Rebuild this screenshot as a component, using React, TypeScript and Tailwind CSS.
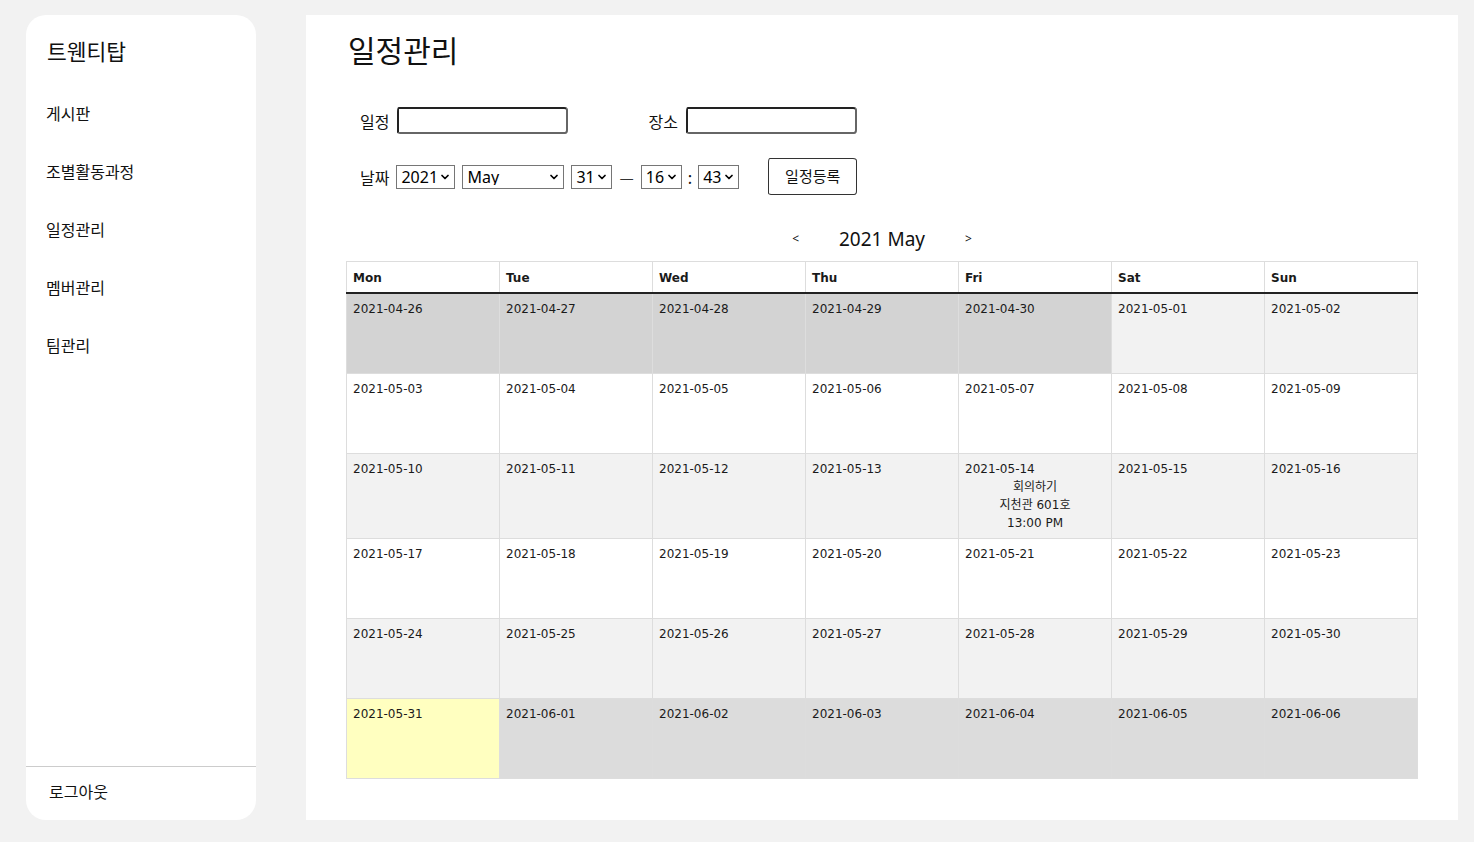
import { ChevronDown } from "lucide-react";

const kr = "font-['Noto_Sans_CJK_KR',sans-serif]";
const cellFont = "font-['DejaVu_Sans','Noto_Sans_CJK_KR',sans-serif]";

const menu = ["게시판", "조별활동과정", "일정관리", "멤버관리", "팀관리"];
const days = ["Mon", "Tue", "Wed", "Thu", "Fri", "Sat", "Sun"];

type Cell = { date: string; bg: string; event?: string[] };

function buildWeeks(): Cell[][] {
  const start = new Date(2021, 3, 26);
  const weeks: Cell[][] = [];
  for (let w = 0; w < 6; w++) {
    const row: Cell[] = [];
    for (let d = 0; d < 7; d++) {
      const dt = new Date(start);
      dt.setDate(start.getDate() + w * 7 + d);
      const date = `${dt.getFullYear()}-${String(dt.getMonth() + 1).padStart(2, "0")}-${String(dt.getDate()).padStart(2, "0")}`;
      let bg = w % 2 === 0 ? "bg-[#f2f2f2]" : "bg-white";
      if (w === 0 && d < 5) bg = "bg-[#d3d3d3]";
      if (w === 5) bg = d === 0 ? "bg-[#ffffc0]" : "bg-[#dcdcdc]";
      row.push({
        date,
        bg,
        event: date === "2021-05-14" ? ["회의하기", "지천관 601호", "13:00 PM"] : undefined,
      });
    }
    weeks.push(row);
  }
  return weeks;
}

function Select({ value, w }: { value: string; w: string }) {
  return (
    <div className={`relative ${w}`}>
      <select
        defaultValue={value}
        className="h-6 w-full appearance-none border border-[#767676] bg-white pl-1 font-['Noto_Sans',sans-serif] text-[16px] leading-none text-black"
      >
        <option>{value}</option>
      </select>
      <ChevronDown
        className="pointer-events-none absolute right-1 top-1/2 h-3 w-3 -translate-y-1/2 text-black"
        strokeWidth={3.5}
      />
    </div>
  );
}

function Sidebar() {
  return (
    <aside className={`flex w-[230px] shrink-0 flex-col rounded-[20px] bg-white ${kr}`}>
      <h1 className="px-[21px] pt-[20px] text-[21.5px] text-[#111]">트웬티탑</h1>
      <nav className="mt-[35px] flex flex-col gap-[36px] px-5">
        {menu.map((m) => (
          <a key={m} className="text-[16px] leading-[22px] text-[#111]">
            {m}
          </a>
        ))}
      </nav>
      <div className="mt-auto border-t border-[#cccccc] px-[23px] pb-[17px] pt-[12px]">
        <span className="text-[16px] text-[#111]">로그아웃</span>
      </div>
    </aside>
  );
}

export default function App() {
  const weeks = buildWeeks();
  return (
    <div className="flex h-[842px] w-full gap-[50px] bg-[#f2f2f2] pb-[22px] pl-[26px] pr-4 pt-[15px]">
      <Sidebar />
      <main className="flex flex-1 flex-col bg-white px-10 pt-[12px]">
        <h2 className={`pl-[2px] text-[30px] leading-[44px] text-[#111] ${kr}`}>일정관리</h2>

        <div className={`mt-[36px] flex items-center pl-[14px] text-[16px] text-[#111] ${kr}`}>
          <span>일정</span>
          <input className="ml-[8px] h-[27px] w-[171px] rounded-[2px_4px_3px_5px/5px_3px_4px_2px] border-2 border-[#222] border-b-[#666] border-r-[#666] bg-white" />
          <span className="ml-[80px]">장소</span>
          <input className="ml-[8px] h-[27px] w-[171px] rounded-[2px_4px_3px_5px/5px_3px_4px_2px] border-2 border-[#222] border-b-[#666] border-r-[#666] bg-white" />
        </div>

        <div className={`mt-[24px] flex items-center pl-[14px] text-[16px] text-[#111] ${kr}`}>
          <span className="mr-[7px]">날짜</span>
          <Select value="2021" w="w-[59px]" />
          <div className="ml-[7px]">
            <Select value="May" w="w-[102px]" />
          </div>
          <div className="ml-[7px]">
            <Select value="31" w="w-[41px]" />
          </div>
          <span className="mx-[7px] text-[#333]">—</span>
          <Select value="16" w="w-[41px]" />
          <span className="mx-[6px]">:</span>
          <Select value="43" w="w-[41px]" />
          <button className="ml-[29px] h-[37px] w-[89px] rounded-[2px_4px_3px_5px/5px_3px_4px_2px] border border-[#333] bg-white text-[15px] text-[#111]">
            일정등록
          </button>
        </div>

        <div className="mt-[31px] flex items-center justify-center font-['Noto_Sans',sans-serif] text-[#111]">
          <span className="text-[12px]">&lt;</span>
          <span className="mx-[40px] text-[19px] leading-[26px]">2021 May</span>
          <span className="text-[12px]">&gt;</span>
        </div>

        <table className={`mt-[9px] w-full table-fixed border-collapse ${cellFont} text-[12px] text-[#1a1a1a]`}>
          <thead>
            <tr>
              {days.map((d) => (
                <th
                  key={d}
                  className="h-[31px] border border-b-2 border-[#dddddd] border-b-[#222] bg-white px-[6px] pt-[2px] text-left text-[12px] font-bold"
                >
                  {d}
                </th>
              ))}
            </tr>
          </thead>
          <tbody>
            {weeks.map((row, i) => (
              <tr key={i}>
                {row.map((c) => (
                  <td
                    key={c.date}
                    className={`${i === 0 ? "h-[81px]" : "h-20"} border border-[#dddddd] px-[6px] pb-[6px] pt-[6px] align-top leading-[18px] ${c.bg}`}
                  >
                    <div>{c.date}</div>
                    {c.event && (
                      <div className="text-center">
                        {c.event.map((e) => (
                          <div key={e}>{e}</div>
                        ))}
                      </div>
                    )}
                  </td>
                ))}
              </tr>
            ))}
          </tbody>
        </table>
      </main>
    </div>
  );
}
